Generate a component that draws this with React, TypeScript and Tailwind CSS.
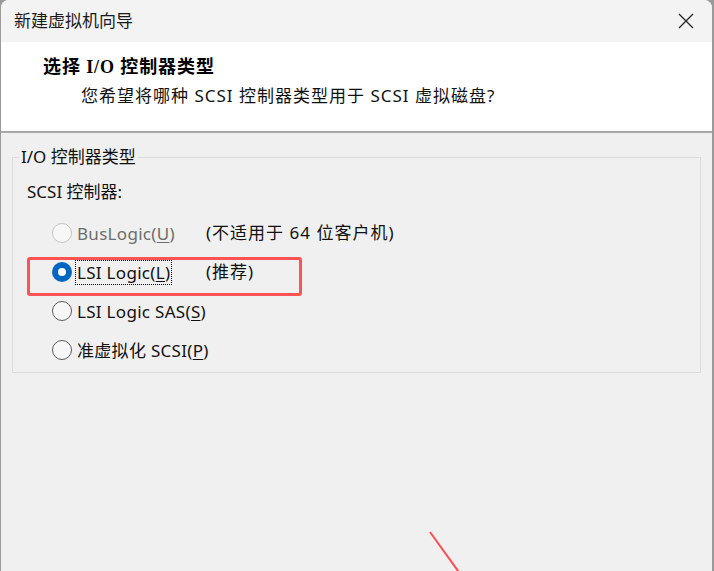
import React from 'react';

const font = { fontFamily: '"Noto Sans", "Noto Sans CJK SC", sans-serif' };

type Option = { label: string; key: string; note?: string; disabled?: boolean; checked?: boolean };

const options: Option[] = [
  { label: 'BusLogic(', key: 'U', note: '(不适用于 64 位客户机)', disabled: true },
  { label: 'LSI Logic(', key: 'L', note: '(推荐)', checked: true },
  { label: 'LSI Logic SAS(', key: 'S' },
  { label: '准虚拟化 SCSI(', key: 'P' },
];

const Radio: React.FC<{ checked?: boolean; disabled?: boolean }> = ({ checked, disabled }) => {
  if (checked) {
    return (
      <span className="flex h-[20px] w-[20px] shrink-0 items-center justify-center rounded-full bg-[#0067c0]">
        <span className="h-[8px] w-[8px] rounded-full bg-white" />
      </span>
    );
  }
  return (
    <span
      className={`h-[20px] w-[20px] shrink-0 rounded-full border bg-[#f7f7f7] ${disabled ? 'border-[#c4c4c4]' : 'border-[#5a5a5a]'}`}
    />
  );
};

export default function App() {
  return (
    <div className="relative h-[571px] w-[714px] overflow-hidden bg-[#9a9a9a]" style={font}>
      <div className="ml-[1px] mr-[2px] flex h-[571px] flex-col overflow-hidden rounded-t-[8px] bg-[#f0f0f0]">
        {/* title bar */}
        <div className="flex h-[42px] items-center justify-between bg-[#f3f3f3] pl-[13px] pr-[16px]">
          <span className="text-[17px] text-[#1a1a1a]">新建虚拟机向导</span>
          <svg width="18" height="18" viewBox="0 0 18 18" className="mr-[1px]">
            <path d="M2 2L16 16M16 2L2 16" stroke="#222" strokeWidth="1.3" />
          </svg>
        </div>

        {/* header */}
        <div className="h-[91px] border-b-[2px] border-[#a8a8a8] bg-white pl-[42px] pt-[12px]">
          <div
            className="text-[18px] font-bold tracking-[0.9px] text-black"
            style={{ fontFamily: '"Liberation Serif", "Noto Sans CJK SC", serif' }}
          >
            选择 I/O 控制器类型
          </div>
          <div className="ml-[38px] mt-[2px] text-[17px] tracking-[1px] text-[#111]">
            您希望将哪种 SCSI 控制器类型用于 SCSI 虚拟磁盘?
          </div>
        </div>

        {/* group box */}
        <div className="mx-[11px] mt-[24px] h-[216px] border border-[#dcdcdc] px-[14px]">
          <div className="-mt-[13px] ml-[-8px] w-fit bg-[#f0f0f0] px-[2px] text-[17px] leading-[24px] text-[#111]">
            I/O 控制器类型
          </div>
          <div className="mt-[10px] text-[17px] text-[#111]">SCSI 控制器:</div>
          <div className="mt-[17px] flex flex-col gap-[16px]">
            {options.map((o) => (
              <div key={o.key} className="flex h-[23px] items-center">
                <div className="ml-[25px] flex w-[156px] items-center gap-[4px]">
                  <Radio checked={o.checked} disabled={o.disabled} />
                  <span
                    className={`whitespace-nowrap px-[1px] text-[17px] leading-[23px] tracking-[0.3px] ${o.disabled ? 'text-[#6d6d6d]' : 'text-[#111]'} ${
                      o.checked ? 'outline outline-1 outline-dotted outline-black' : ''
                    }`}
                  >
                    {o.label}
                    <span className="underline underline-offset-2">{o.key}</span>)
                  </span>
                </div>
                {o.note && <span className="ml-[-2px] text-[17px] tracking-[1px] text-[#111]">{o.note}</span>}
              </div>
            ))}
          </div>
        </div>
      </div>

      {/* red annotation box */}
      <div className="absolute left-[27px] top-[257px] h-[39px] w-[275px] rounded-[3px] border-[3px] border-[#ff5252]" />
      {/* red annotation arrow line */}
      <svg className="absolute left-0 top-0" width="714" height="571">
        <line x1="430" y1="532" x2="461" y2="575" stroke="#ff4d4d" strokeWidth="2" />
      </svg>
    </div>
  );
}
